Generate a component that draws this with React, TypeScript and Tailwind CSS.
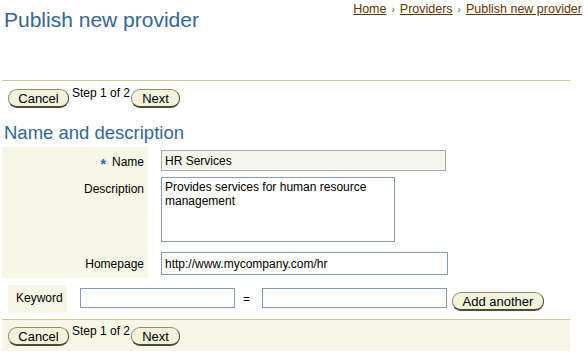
import React from "react";

function Btn({ label, className }: { label: string; className: string }) {
  return (
    <button
      type="button"
      className={`block h-[19px] shrink-0 rounded-[9px] border border-[#8f8f6f] border-r-[#4d4d33] border-b-2 border-b-[#4d4d33] bg-[#f3f3dc] pt-[1px] text-[13px] leading-[15px] text-black ${className}`}
    >
      {label}
    </button>
  );
}

function StepBar({ first }: { first: string }) {
  return (
    <div className="flex items-start">
      <Btn label="Cancel" className={`${first} mt-[4px] w-[61px]`} />
      <span className="ml-[3px] w-[59px] shrink-0 pt-[1px] text-[12px] leading-[14px] text-black">Step 1 of 2</span>
      <Btn label="Next" className="mt-[4px] w-[49px]" />
    </div>
  );
}

export default function App() {
  return (
    <div className="relative w-[588px] h-[357px] overflow-hidden bg-white font-['Liberation_Sans',Arial,sans-serif] text-black">
      {/* header */}
      <div className="flex h-[80px] items-start justify-between">
        <h1 className="pl-[4px] pt-[8px] text-[21px] leading-[24px] font-normal text-[#336699]">
          Publish new provider
        </h1>
        <div className="pr-[6px] pt-[2px] text-[12.5px] leading-[15px] text-[#663300]">
          <a href="#" className="underline">Home</a>
          <span className="mx-[5px] text-[10px] text-[#666655]">›</span>
          <a href="#" className="underline">Providers</a>
          <span className="mx-[5px] text-[10px] text-[#666655]">›</span>
          <a href="#" className="underline">Publish new provider</a>
        </div>
      </div>
      <div className="ml-[2px] h-px w-[568px] bg-[#cccc99]" />

      {/* top step bar */}
      <div className="pt-[4px]">
        <StepBar first="ml-[8px]" />
      </div>

      <h2 className="mt-[14px] pl-[4px] text-[18.5px] leading-[21px] font-normal text-[#336699]">
        Name and description
      </h2>

      {/* form */}
      <div className="ml-[2px] mt-[4px] grid grid-cols-[146px_1fr] text-[12px] leading-[14px]">
        <div className="bg-[#f7f7e7] pr-[4px] pt-[8px] text-right">
          <span className="align-[-3px] text-[14px] font-bold text-[#336699]">*</span>
          <span className="ml-[6px]">Name</span>
        </div>
        <div className="pl-[13px] pt-[3px] pb-[3px]">
          <input
            type="text"
            defaultValue="HR Services"
            className="block h-[21px] w-[285px] border border-[#a9a9a9] bg-[#f5f7ee] px-[3px] pt-[1px] text-[12px] text-black outline-none"
          />
        </div>

        <div className="bg-[#f7f7e7] pr-[4px] pt-[8px] text-right">Description</div>
        <div className="pl-[13px] pt-[3px] pb-[3px]">
          <textarea
            defaultValue="Provides services for human resource management"
            className="block h-[65px] w-[234px] resize-none overflow-hidden border border-[#7f9db9] bg-white px-[3px] pt-[2px] text-[12px] leading-[14px] text-black outline-none"
          />
        </div>

        <div className="bg-[#f7f7e7] pr-[4px] pt-[12px] text-right">Homepage</div>
        <div className="pl-[13px] pt-[7px] pb-[3px]">
          <input
            type="text"
            defaultValue="http://www.mycompany.com/hr"
            className="block h-[23px] w-[287px] border border-[#7f9db9] bg-white px-[3px] pt-[1px] text-[12px] text-black outline-none"
          />
        </div>
      </div>

      {/* keyword row */}
      <div className="ml-[8px] mt-[7px] flex items-start text-[12px] leading-[14px]">
        <div className="h-[28px] w-[59px] shrink-0 bg-[#f7f7e7] pl-[8px] pt-[6px]">Keyword</div>
        <input
          type="text"
          className="ml-[13px] mt-[3px] h-[20px] w-[155px] shrink-0 border border-[#7f9db9] bg-white px-[3px] text-[12px] outline-none"
        />
        <span className="ml-[8px] mt-[7px] w-[7px] shrink-0">=</span>
        <input
          type="text"
          className="ml-[12px] mt-[3px] h-[20px] w-[185px] shrink-0 border border-[#7f9db9] bg-white px-[3px] text-[12px] outline-none"
        />
        <Btn label="Add another" className="ml-[5px] mt-[7px] w-[92px]" />
      </div>

      {/* bottom step bar */}
      <div className="ml-[2px] mt-[6px] h-[32px] w-[568px] border-t border-[#cccc99] bg-[#f7f7e7] pt-[3px]">
        <StepBar first="ml-[6px]" />
      </div>
    </div>
  );
}
